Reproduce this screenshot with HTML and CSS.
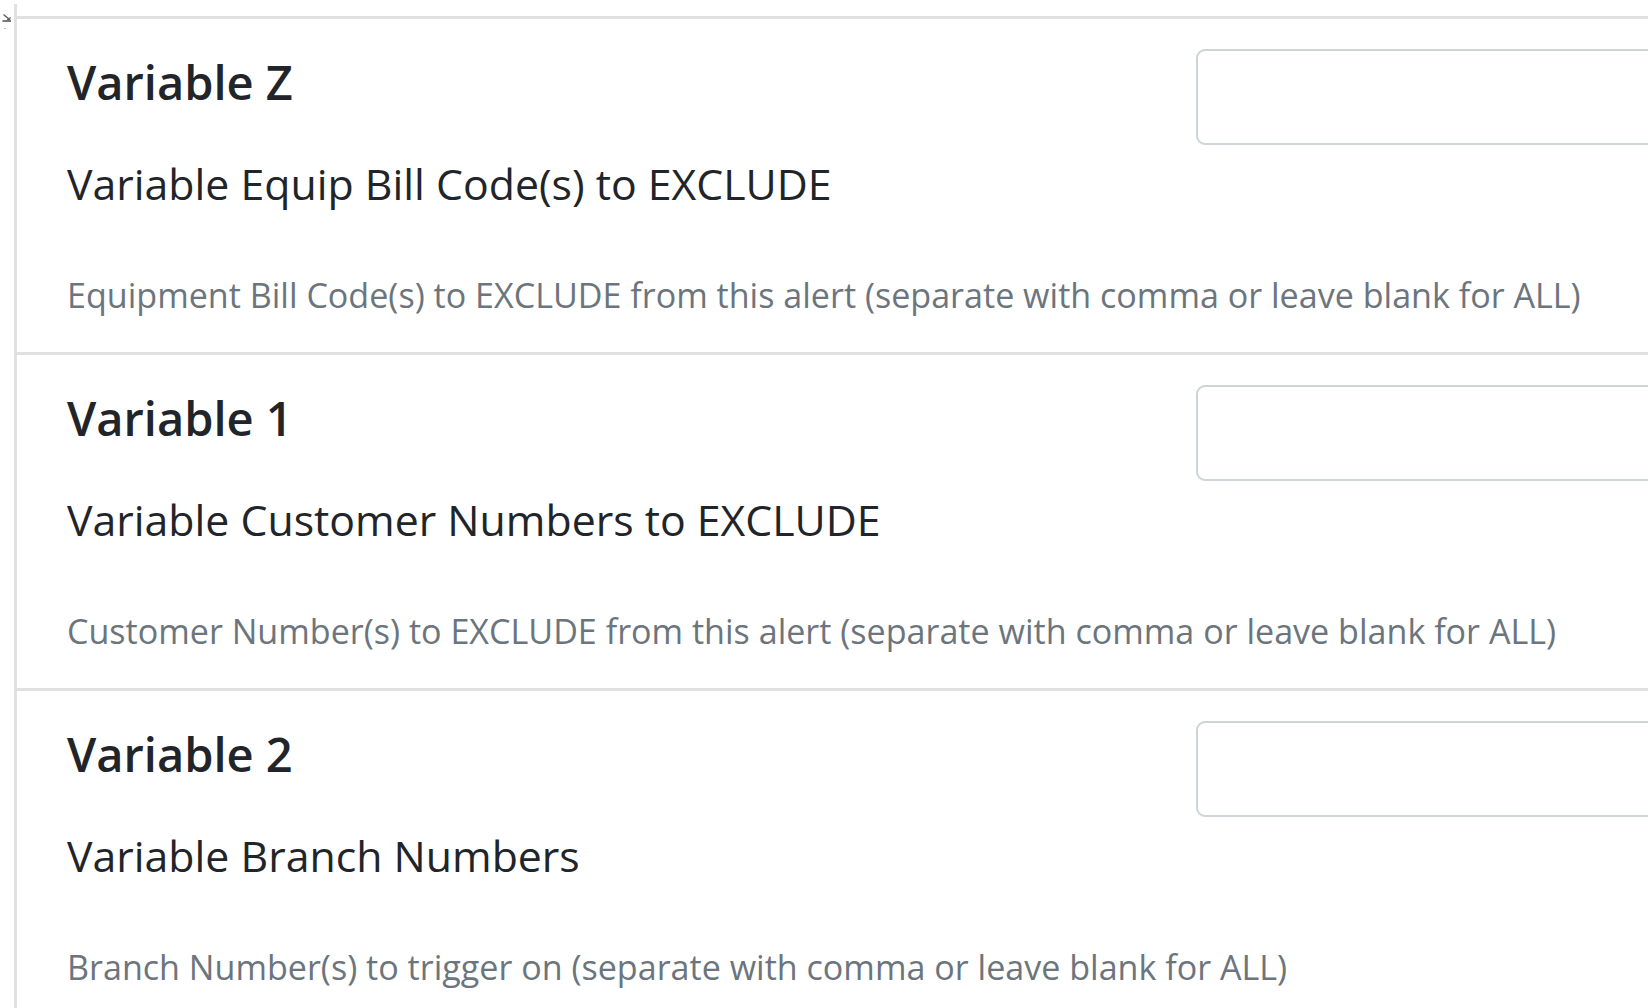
FILE: index.html
```html
<!DOCTYPE html>
<html lang="en">
<head>
<meta charset="utf-8">
<title>Alert Variables</title>
<link rel="stylesheet" href="styles.css">
</head>
<body>
<div class="gutter">
  <svg class="corner-icon" width="10" height="20" viewBox="0 0 10 20" aria-hidden="true">
    <path d="M1.5 3.5 L7.5 8.5" stroke="#555" stroke-width="1.2" fill="none"/>
    <path d="M5 8.6 L8 8.6 L8 6" stroke="#555" stroke-width="1" fill="none"/>
    <path d="M0.5 10 H9" stroke="#222" stroke-width="1.2"/>
    <rect x="2.5" y="17" width="1" height="1" fill="#888"/>
  </svg>
</div>
<div class="container">
  <section class="row">
    <div class="text-col">
      <h5 class="var-title">Variable Z</h5>
      <label class="var-label">Variable Equip Bill Code(s) to EXCLUDE</label>
      <small class="var-help">Equipment Bill Code(s) to EXCLUDE from this alert (separate with comma or leave blank for ALL)</small>
    </div>
    <div class="input-col"><input class="form-control" type="text"></div>
  </section>
  <section class="row">
    <div class="text-col">
      <h5 class="var-title">Variable 1</h5>
      <label class="var-label">Variable Customer Numbers to EXCLUDE</label>
      <small class="var-help">Customer Number(s) to EXCLUDE from this alert (separate with comma or leave blank for ALL)</small>
    </div>
    <div class="input-col"><input class="form-control" type="text"></div>
  </section>
  <section class="row">
    <div class="text-col">
      <h5 class="var-title">Variable 2</h5>
      <label class="var-label">Variable Branch Numbers</label>
      <small class="var-help">Branch Number(s) to trigger on (separate with comma or leave blank for ALL)</small>
    </div>
    <div class="input-col"><input class="form-control" type="text"></div>
  </section>
</div>
</body>
</html>
```
FILE: styles.css
```css
html, body {
  margin: 0;
  padding: 0;
  background: #fff;
  overflow: hidden;
  height: 100%;
}
body {
  display: flex;
  font-family: "Open Sans", "Noto Sans", sans-serif;
  color: #212529;
}
.gutter {
  width: 14px;
  flex-shrink: 0;
}
.corner-icon {
  display: block;
  margin-top: 11px;
  margin-left: 2px;
}
.container {
  flex: 1;
  min-width: 0;
  border-left: 3px solid #e1e1e1;
  margin-top: 4px;
  padding-top: 12px;
}
.row {
  display: flex;
  border-top: 3px solid #e1e1e1;
  height: 333px;
}
.text-col {
  width: 1129px;
  flex-shrink: 0;
  padding-left: 50px;
  display: flex;
  flex-direction: column;
  align-items: flex-start;
}
.var-title {
  margin: 35px 0 0;
  font-size: 47px;
  line-height: 56px;
  font-weight: 600;
  color: #212529;
}
.var-label {
  margin-top: 48px;
  font-size: 42.8px;
  line-height: 51px;
  color: #212529;
  white-space: nowrap;
}
.var-help {
  margin-top: 66px;
  font-size: 34.1px;
  line-height: 41px;
  color: #6c757d;
  white-space: nowrap;
}
.input-col {
  flex: 1;
  min-width: 0;
  overflow: hidden;
  padding-top: 30px;
  height: 110px;
}
.form-control {
  display: block;
  box-sizing: border-box;
  width: calc(100% + 20px);
  height: 96px;
  border: 2.5px solid #ced4da;
  border-radius: 9px;
  background: #fff;
  margin: 0;
  padding: 0 30px;
  font: inherit;
}
```
